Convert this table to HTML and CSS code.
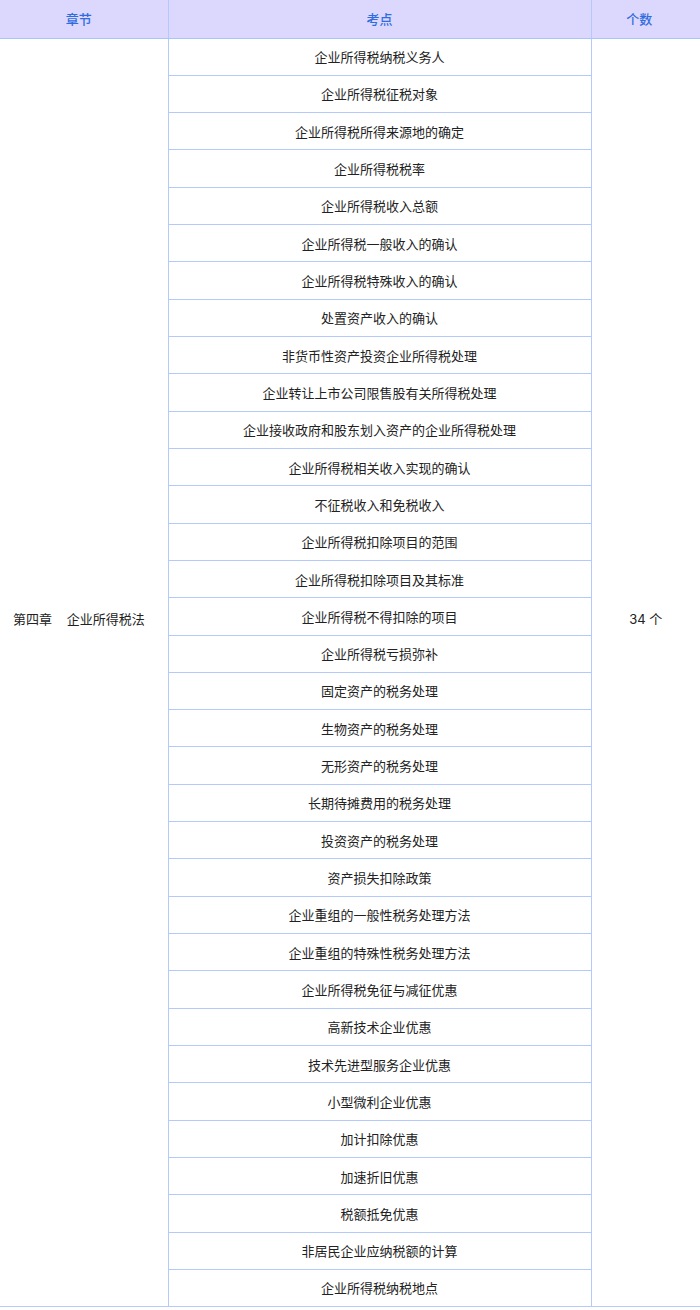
FILE: index.html
```html
<!DOCTYPE html>
<html lang="zh">
<head>
<meta charset="utf-8">
<link rel="stylesheet" href="styles.css">
</head>
<body>
<table class="tbl">
<colgroup><col class="c1"><col class="c2"><col class="c3"></colgroup>
<thead>
<tr><th class="h1">章节</th><th>考点</th><th class="h3">个数</th></tr>
</thead>
<tbody>
<tr><td rowspan="34" class="chap">第四章&nbsp;&nbsp;&nbsp;&nbsp;企业所得税法</td><td>企业所得税纳税义务人</td><td rowspan="34" class="cnt">34 个</td></tr>
<tr><td>企业所得税征税对象</td></tr>
<tr><td>企业所得税所得来源地的确定</td></tr>
<tr><td>企业所得税税率</td></tr>
<tr><td>企业所得税收入总额</td></tr>
<tr><td>企业所得税一般收入的确认</td></tr>
<tr><td>企业所得税特殊收入的确认</td></tr>
<tr><td>处置资产收入的确认</td></tr>
<tr><td>非货币性资产投资企业所得税处理</td></tr>
<tr><td>企业转让上市公司限售股有关所得税处理</td></tr>
<tr><td>企业接收政府和股东划入资产的企业所得税处理</td></tr>
<tr><td>企业所得税相关收入实现的确认</td></tr>
<tr><td>不征税收入和免税收入</td></tr>
<tr><td>企业所得税扣除项目的范围</td></tr>
<tr><td>企业所得税扣除项目及其标准</td></tr>
<tr><td>企业所得税不得扣除的项目</td></tr>
<tr><td>企业所得税亏损弥补</td></tr>
<tr><td>固定资产的税务处理</td></tr>
<tr><td>生物资产的税务处理</td></tr>
<tr><td>无形资产的税务处理</td></tr>
<tr><td>长期待摊费用的税务处理</td></tr>
<tr><td>投资资产的税务处理</td></tr>
<tr><td>资产损失扣除政策</td></tr>
<tr><td>企业重组的一般性税务处理方法</td></tr>
<tr><td>企业重组的特殊性税务处理方法</td></tr>
<tr><td>企业所得税免征与减征优惠</td></tr>
<tr><td>高新技术企业优惠</td></tr>
<tr><td>技术先进型服务企业优惠</td></tr>
<tr><td>小型微利企业优惠</td></tr>
<tr><td>加计扣除优惠</td></tr>
<tr><td>加速折旧优惠</td></tr>
<tr><td>税额抵免优惠</td></tr>
<tr><td>非居民企业应纳税额的计算</td></tr>
<tr><td>企业所得税纳税地点</td></tr>
</tbody>
</table>
</body>
</html>
```
FILE: styles.css
```css
html, body {
  margin: 0;
  padding: 0;
  background: #ffffff;
}
body {
  font-family: Inter, "Noto Sans CJK SC", sans-serif;
  font-size: 13px;
  color: #222222;
}
.tbl {
  width: 700px;
  border-collapse: collapse;
  table-layout: fixed;
}
.c1 { width: 168px; }
.c2 { width: 423px; }
.c3 { width: 109px; }
.tbl th {
  height: 38px;
  padding: 0;
  box-sizing: border-box;
  background: #dcd8fd;
  color: #2f6ce0;
  font-weight: 500;
  text-align: center;
  border-bottom: 1px solid #a9c4fb;
  border-left: 1px solid #b4cafb;
}
.tbl th.h1 {
  border-left: none;
  padding-right: 10px;
}
.tbl th.h3 {
  padding-right: 13px;
}
.tbl td {
  height: 37.32px;
  padding: 0;
  box-sizing: border-box;
  text-align: center;
  vertical-align: middle;
  border-bottom: 1px solid #b4cafb;
  border-left: 1px solid #b4cafb;
}
.tbl td.chap {
  border-left: none;
  text-align: left;
  padding-left: 13px;
  padding-bottom: 108px;
}
.tbl td.cnt {
  padding-bottom: 108px;
}
```
